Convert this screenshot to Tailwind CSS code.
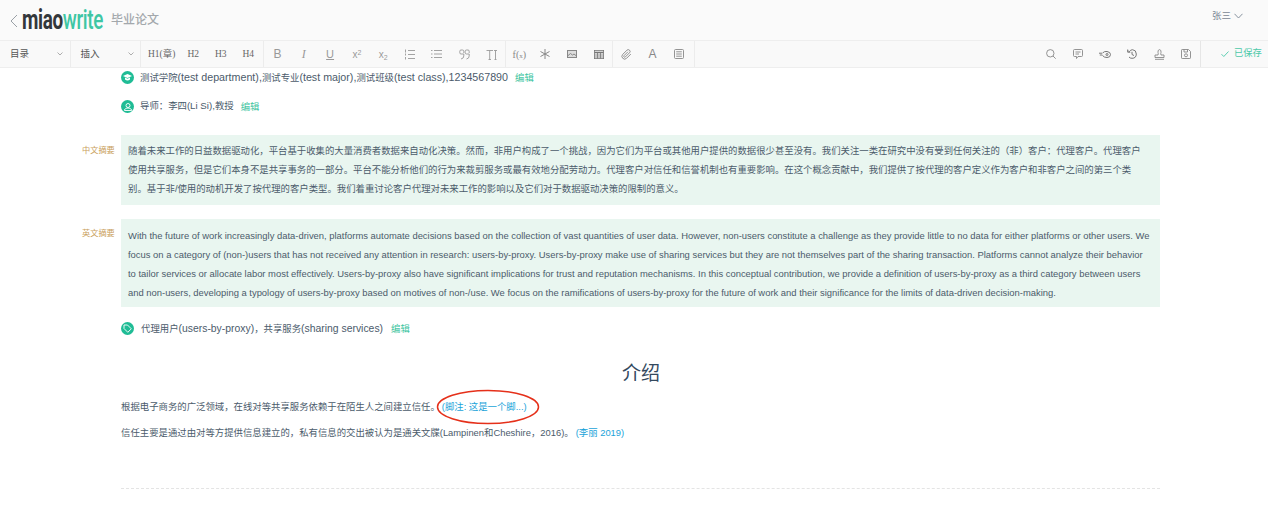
<!doctype html>
<html lang="zh">
<head>
  <meta charset="UTF-8" />
  <title>miaowrite</title>
  <script src="https://cdn.jsdelivr.net/npm/@tailwindcss/browser@4"></script>
</head>
<body class="w-[1268px] h-[506px] overflow-hidden bg-white font-['Liberation_Sans','Noto_Sans_CJK_SC',sans-serif] text-[#4b5b6b]">
  <!-- header -->
  <header class="h-[40px] bg-[#fafafa] flex items-center">
    <svg class="w-[8px] h-[14px] ml-[10px] mt-[2px]" viewBox="0 0 8 14" fill="none" stroke="#9aa0a6" stroke-width="1"><path d="M7 1 1 7l6 6" /></svg>
    <div class="ml-[4px] w-[82px] h-[30px]">
      <span class="inline-block origin-left scale-x-[.675] font-['Roboto'] font-bold text-[28px] leading-[30px] tracking-[-.5px] whitespace-nowrap text-[#33373b]">miao<span class="font-medium text-[#3ec6a4]">write</span></span>
    </div>
    <span class="ml-[7px] text-[12px] text-[#a3a8ac] font-medium">毕业论文</span>
    <div class="ml-auto mr-[25px] mt-[-8px] flex items-center gap-[3px] text-[9.500px] text-[#7b8794]">
      张三
      <svg class="w-[9px] h-[6px]" viewBox="0 0 9 6" fill="none" stroke="#7b8794" stroke-width=".9"><path d="M.5.8 4.500 5l4-4.200" /></svg>
    </div>
  </header>

  <!-- toolbar -->
  <nav class="h-[28px] bg-[#f9f9f9] border-y border-[#eeeeee] flex items-center text-[#888] text-[9.500px]">
    <div class="w-[70.500px] h-full border-r border-[#ececec] flex items-center justify-between pl-[10px] pr-[7px] text-[#555]">
      目录
      <svg class="w-[6px] h-[4px]" viewBox="0 0 6 4" fill="none" stroke="#999" stroke-width=".8"><path d="M.5.5 3 3 5.500.5" /></svg>
    </div>
    <div class="w-[70px] h-full border-r border-[#ececec] flex items-center justify-between pl-[10px] pr-[6px] text-[#555]">
      插入
      <svg class="w-[6px] h-[4px]" viewBox="0 0 6 4" fill="none" stroke="#999" stroke-width=".8"><path d="M.5.5 3 3 5.500.5" /></svg>
    </div>
    <div class="w-[123px] h-full border-r border-[#ececec] flex items-center font-['Liberation_Serif','Noto_Sans_CJK_SC',serif] text-[9.500px] text-[#666] pl-[7.500px]">
      <span class="w-[39.500px]">H1(章)</span><span class="w-[27.500px]">H2</span><span class="w-[27.500px]">H3</span><span>H4</span>
    </div>
    <div class="w-[242px] h-full border-r border-[#ececec] flex items-center pl-[0.5px] text-[#999]">
      <span class="w-[27px] text-center font-['Liberation_Sans'] text-[12px]">B</span>
      <span class="w-[26px] text-center font-['Liberation_Serif'] italic text-[12px]">I</span>
      <span class="w-[27px] text-center font-['Liberation_Sans'] underline text-[11px]">U</span>
      <span class="w-[27px] text-center font-['Liberation_Sans'] text-[10px]">x<sup class="text-[7px] -top-[3px]">2</sup></span>
      <span class="w-[26px] text-center font-['Liberation_Sans'] text-[10px]">x<sub class="text-[7px] -bottom-[2px]">2</sub></span>
      <span class="w-[27px] flex justify-center"><svg class="w-[11px] h-[11px]" viewBox="0 0 11 11" fill="none" stroke="#999" stroke-width=".9"><path d="M4 1.500h7M4 5.500h7M4 9.500h7M1.500 .5v3M1.500 4.500v2M1.500 8v2.500" /></svg></span>
      <span class="w-[28px] flex justify-center"><svg class="w-[11px] h-[10px]" viewBox="0 0 11 10" fill="none" stroke="#999" stroke-width=".9"><path d="M3 1.500h8M3 5h8M3 8.500h8M0 1.500h1.500M0 5h1.500M0 8.500h1.500" /></svg></span>
      <span class="w-[27px] flex justify-center"><svg class="w-[11px] h-[11px]" viewBox="0 0 11 11" fill="none" stroke="#999" stroke-width=".9"><path d="M4.800 4V2.200Q4.800 1 3.500 1H2Q.8 1 .8 2.200V3.800Q.8 5 2 5h2.800V7Q4.800 9.500 2 10M10.200 4V2.200Q10.200 1 9 1H7.500Q6.200 1 6.200 2.200V3.800Q6.200 5 7.500 5h2.700V7Q10.200 9.500 7.500 10" /></svg></span>
      <span class="w-[27px] flex justify-center"><svg class="w-[11px] h-[11px]" viewBox="0 0 11 11" fill="none" stroke="#999" stroke-width=".9"><path d="M.5 1.500h6.500M3.700 1.500v9M2.500 10.500h2.500M8 1.500h3M9.500 1.500v9M8.500 10.500h2" /></svg></span>
    </div>
    <div class="w-[107px] h-full border-r border-[#ececec] flex items-center pl-[0.5px]">
      <span class="w-[27px] text-center font-['Liberation_Serif'] text-[10px] whitespace-nowrap">f(<span class="text-[7px]">x</span>)</span>
      <span class="w-[26px] flex justify-center"><svg class="w-[10px] h-[10px]" viewBox="0 0 10 10" fill="none" stroke="#888" stroke-width="1"><path d="M5 0v10M.5 2.500l9 5M9.500 2.500l-9 5" /></svg></span>
      <span class="w-[28px] flex justify-center"><svg class="w-[10px] h-[8px]" viewBox="0 0 10 8" fill="none" stroke="#888" stroke-width="1"><rect x=".5" y=".5" width="9" height="7" fill="#ddd" /><path d="M.5 6l3-2.500 2 1.500 1.500-1 2.500 2" /></svg></span>
      <span class="w-[26px] flex justify-center"><svg class="w-[10px] h-[9px]" viewBox="0 0 10 9" fill="none" stroke="#777" stroke-width=".8"><rect x=".4" y=".4" width="9.200" height="8.200" /><path d="M.4 2.500h9.200" stroke-width="1.600" /><path d="M.4 5h9.200M.4 7h9.200M3.500 2.500v6M6.500 2.500v6" /></svg></span>
    </div>
    <div class="w-[82px] h-full border-r border-[#ececec] flex items-center">
      <span class="w-[27px] flex justify-center"><svg class="w-[11px] h-[11px]" viewBox="0 0 24 24" fill="none" stroke="#888" stroke-width="2"><path d="M21.440 11.050l-9.190 9.190a6 6 0 0 1-8.490-8.490l9.190-9.190a4 4 0 0 1 5.660 5.660l-9.200 9.190a2 2 0 0 1-2.830-2.830l8.490-8.480" /></svg></span>
      <span class="w-[26px] text-center text-[12px] font-['Liberation_Sans']">A</span>
      <span class="w-[27px] flex justify-center"><svg class="w-[10px] h-[10px]" viewBox="0 0 10 10" fill="none" stroke="#888" stroke-width=".9"><rect x=".5" y=".5" width="9" height="9" rx="1" /><path d="M2.200 2.800h5.600M2.200 5h5.600M2.200 7.200h5.600" /></svg></span>
    </div>
    <!-- right group -->
    <div class="ml-auto h-full flex items-center">
      <span class="w-[27px] flex justify-center"><svg class="w-[10px] h-[10px]" viewBox="0 0 10 10" fill="none" stroke="#888" stroke-width=".9"><circle cx="4.300" cy="4.300" r="3.700" /><path d="M7 7l2.700 2.700" /></svg></span>
      <span class="w-[27px] flex justify-center"><svg class="w-[10px] h-[10px]" viewBox="0 0 10 10" fill="none" stroke="#888" stroke-width=".9"><path d="M1.500.5h7q1 0 1 1v5q0 1-1 1H5L3.500 9.500V7.500h-2q-1 0-1-1v-5q0-1 1-1zM2.500 3h5M2.500 5h3.500" /></svg></span>
      <span class="w-[27px] flex justify-center"><svg class="w-[12px] h-[9px]" viewBox="0 0 12 9" fill="none" stroke="#777" stroke-width="1"><path d="M0 3.200h3M.8 5h2.500M3.500 3Q5.500 1 8 1.500 11.500 2 11.500 4.500 11.500 7.500 8 7.500 5 7.500 3.500 5.500" /><circle cx="8" cy="4.500" r="1" /></svg></span>
      <span class="w-[27px] flex justify-center"><svg class="w-[10px] h-[10px]" viewBox="0 0 10 10" fill="none" stroke="#777" stroke-width="1"><path d="M1 1.500 2.200 2.800Q3.500 .7 5.500 .7 9.300 1 9.300 5 9.300 9.300 5 9.300 3 9.300 2 8M.7.500v2.700h2.600M5 2.800V5.500l2 1" /></svg></span>
      <span class="w-[27px] flex justify-center"><svg class="w-[11px] h-[11px]" viewBox="0 0 11 11" fill="none" stroke="#888" stroke-width=".9"><path d="M4 6Q4.500 4.500 4 3.500 3.500 1 5.500 .6 7.500 1 7 3.500 6.500 4.500 7 6h3v2.500H1V6zM1 10.300h9" /></svg></span>
      <span class="w-[27px] flex justify-center"><svg class="w-[10px] h-[10px]" viewBox="0 0 10 10" fill="none" stroke="#888" stroke-width=".9"><path d="M1.200.5h6.300l2 2v6.300q0 .7-.7.7H1.200q-.7 0-.7-.7V1.200q0-.7.700-.7zM3 .5v2.500h3.500V.5" /><circle cx="5" cy="6.300" r="1.500" /></svg></span>
      <div class="ml-[0.5px] w-[68px] h-full border-l border-[#e6e6e6] flex items-center pl-[20px] text-[#4cc9a9] text-[9.300px]">
        <svg class="w-[8px] h-[6px] mr-[5px]" viewBox="0 0 8 6" fill="none" stroke="#4cc9a9" stroke-width=".9"><path d="M.5 3.200 2.800 5.500 7.500.5" /></svg>
        <span class="whitespace-nowrap mt-[-1px]">已保存</span>
      </div>
    </div>
  </nav>

  <!-- document -->
  <main class="relative h-[438px] overflow-hidden pl-[121px] pr-[108px] text-[9.400px]">
    <div class="h-[19px] flex items-center gap-[6px]">
      <span class="w-[13px] h-[13px] rounded-full bg-[#1fbc95] flex items-center justify-center"><svg class="w-[9px] h-[7px]" viewBox="0 0 9 7" fill="#fff"><path d="M4.500 0 9 2 4.500 4 0 2zM2 3.600 4.500 4.800 7 3.600V5.500Q4.500 7.500 2 5.500z" /></svg></span>
      <span class="whitespace-nowrap">测试学院<span class="text-[10.700px]">(test department),</span>测试专业<span class="text-[10.700px]">(test major),</span>测试班级<span class="text-[10.700px]">(test class),1234567890</span></span>
      <a class="ml-[1px] mt-[1px] text-[#3cc4a0]">编辑</a>
    </div>
    <div class="h-[19px] mt-[10px] flex items-center gap-[6px]">
      <span class="w-[13px] h-[13px] rounded-full bg-[#1fbc95] flex items-center justify-center"><svg class="w-[8px] h-[8px]" viewBox="0 0 8 8" fill="none" stroke="#fff" stroke-width=".9"><circle cx="4" cy="2.500" r="2" /><path d="M.5 7.500h7V6.500Q6 5 4 5T.5 6.500z" /></svg></span>
      <span class="whitespace-nowrap">导师：李四<span class="text-[9.700px]">(Li Si),</span>教授</span>
      <a class="ml-[1px] mt-[1px] text-[#3cc4a0]">编辑</a>
    </div>

    <section class="relative mt-[19px] h-[70px] bg-[#e9f6f0] pl-[7px] pt-[5.500px] leading-[19px] whitespace-nowrap">
      <span class="absolute left-[-39px] top-[6px] text-[8.200px] text-[#c9a05c]">中文摘要</span>
      随着未来工作的日益数据驱动化，平台基于收集的大量消费者数据来自动化决策。然而，非用户构成了一个挑战，因为它们为平台或其他用户提供的数据很少甚至没有。我们关注一类在研究中没有受到任何关注的（非）客户：代理客户。代理客户<br />
      使用共享服务，但是它们本身不是共享事务的一部分。平台不能分析他们的行为来裁剪服务或最有效地分配劳动力。代理客户对信任和信誉机制也有重要影响。在这个概念贡献中，我们提供了按代理的客户定义作为客户和非客户之间的第三个类<br />
      别。基于非/使用的动机开发了按代理的客户类型。我们着重讨论客户代理对未来工作的影响以及它们对于数据驱动决策的限制的意义。
    </section>

    <section class="relative mt-[14px] h-[88px] bg-[#e9f6f0] pl-[7px] pt-[7px] text-[9.420px] leading-[19px] whitespace-nowrap">
      <span class="absolute left-[-39px] top-[5px] text-[8.200px] text-[#c9a05c]">英文摘要</span>
      With the future of work increasingly data-driven, platforms automate decisions based on the collection of vast quantities of user data. However, non-users constitute a challenge as they provide little to no data for either platforms or other users. We<br />
      focus on a category of (non-)users that has not received any attention in research: users-by-proxy. Users-by-proxy make use of sharing services but they are not themselves part of the sharing transaction. Platforms cannot analyze their behavior<br />
      to tailor services or allocate labor most effectively. Users-by-proxy also have significant implications for trust and reputation mechanisms. In this conceptual contribution, we provide a definition of users-by-proxy as a third category between users<br />
      and non-users, developing a typology of users-by-proxy based on motives of non-/use. We focus on the ramifications of users-by-proxy for the future of work and their significance for the limits of data-driven decision-making.
    </section>

    <div class="h-[19px] mt-[12px] flex items-center gap-[7px]">
      <span class="w-[13px] h-[13px] rounded-full bg-[#1fbc95] flex items-center justify-center"><svg class="w-[9px] h-[9px]" viewBox="0 0 9 9" fill="none" stroke="#fff" stroke-width=".9"><path d="M1 1h3.500L8.300 4.800 4.800 8.300 1 4.500z" /></svg></span>
      <span class="whitespace-nowrap">代理用户<span class="text-[10.400px]">(users-by-proxy)</span>，共享服务<span class="text-[10.400px]">(sharing services)</span></span>
      <a class="ml-[1px] mt-[1px] text-[#3cc4a0]">编辑</a>
    </div>

    <h1 class="mt-[20px] h-[32px] leading-[32px] text-center text-[19px] text-[#34495e] ml-[1px]">介绍</h1>
    <p class="mt-[7px] h-[19px] leading-[19px] whitespace-nowrap">根据电子商务的广泛领域，在线对等共享服务依赖于在陌生人之间建立信任。<a class="ml-[2px] text-[#1aa3d9]">(脚注: 这是一个脚...)</a></p>
    <p class="mt-[7px] h-[19px] leading-[19px] whitespace-nowrap">信任主要是通过由对等方提供信息建立的，私有信息的交出被认为是通关文牒(Lampinen和Cheshire，2016)。<a class="ml-[2px] text-[#1aa3d9]">(李丽 2019)</a></p>
    <div class="mt-[46px] border-t border-dashed border-[#e4e4e4]"></div>

    <!-- red annotation over the footnote -->
    <svg class="absolute left-[436px] top-[321px] w-[104px] h-[36px]" viewBox="0 0 104 36" fill="none" stroke="#e5301a" stroke-width="1.500"><ellipse cx="52" cy="18" rx="50.500" ry="16.500" /></svg>
  </main>
</body>
</html>
